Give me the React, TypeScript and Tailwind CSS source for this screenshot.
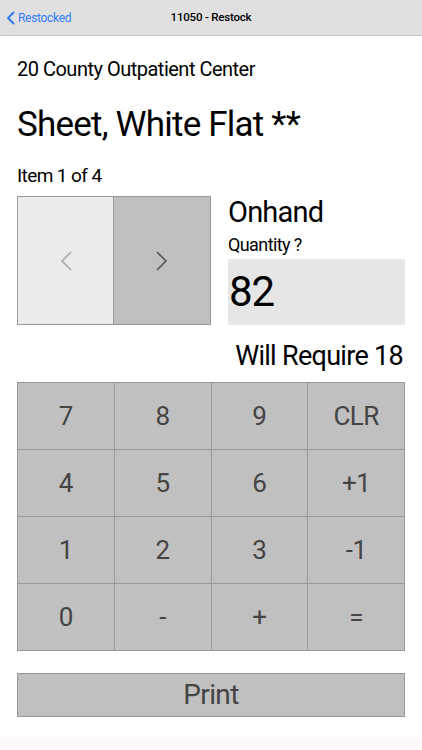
const keys = ['7', '8', '9', 'CLR', '4', '5', '6', '+1', '1', '2', '3', '-1', '0', '-', '+', '='];

const App = () => {
  return (
    <main
      className="w-[422px] h-[750px] bg-white flex flex-col overflow-hidden text-black"
      style={{ fontFamily: 'Roboto, "Liberation Sans", sans-serif' }}
    >
      <div className="h-[36px] shrink-0 bg-[#e0e0e0] border-b border-[#c4c4c4] flex items-center relative">
        <div className="flex items-center pl-[6px] text-[#2f7cf6] text-[12px] tracking-[-0.3px]">
          <svg width="9" height="14" viewBox="0 0 9 14" className="mr-[3px]">
            <path d="M7.5 1.5 L2 7 L7.5 12.5" fill="none" stroke="#2f7cf6" strokeWidth="2" strokeLinecap="round" strokeLinejoin="round" />
          </svg>
          Restocked
        </div>
        <div className="absolute left-0 right-0 text-center text-[11.5px] font-medium tracking-[-0.2px] pointer-events-none">
          11050 - Restock
        </div>
      </div>

      <div className="px-[17px] flex flex-col">
        <div className="mt-[20px] text-[20px] leading-[26px] tracking-[-0.5px]">20 County Outpatient Center</div>
        <div className="mt-[22px] text-[35px] leading-[42px] tracking-[-0.8px]">Sheet, White Flat **</div>
        <div className="mt-[18px] text-[19px] leading-[24px] tracking-[-0.6px]">Item 1 of 4</div>

        <div className="mt-[8px] flex">
          <div className="w-[194px] h-[129px] flex border border-[#999]">
            <div className="w-1/2 bg-[#ececec] flex items-center justify-center border-r border-[#999]">
              <svg width="14" height="22" viewBox="0 0 14 22">
                <path d="M12 2 L3 11 L12 20" fill="none" stroke="#aaa" strokeWidth="1.6" />
              </svg>
            </div>
            <div className="w-1/2 bg-[#bfbfbf] flex items-center justify-center">
              <svg width="14" height="22" viewBox="0 0 14 22">
                <path d="M2 2 L11 11 L2 20" fill="none" stroke="#555" strokeWidth="1.6" />
              </svg>
            </div>
          </div>
          <div className="ml-[17px] flex-1 flex flex-col">
            <div className="mt-[1px] text-[29px] leading-[30px] tracking-[-0.8px]">Onhand</div>
            <div className="mt-[6px] text-[18px] leading-[24px] tracking-[-0.6px]">Quantity ?</div>
            <div className="mt-[2px] h-[66px] bg-[#e6e6e6] flex items-center text-[42px] leading-none tracking-[-1px] pl-[1px]">82</div>
          </div>
        </div>

        <div className="mt-[14px] text-right pr-[2px] text-[27px] leading-[34px] tracking-[-0.7px]">Will Require 18</div>

        <div className="mt-[9px] grid grid-cols-4 border border-[#999] bg-[#999] gap-px">
          {keys.map((k) => (
            <div key={k} className="h-[66px] bg-[#c0c0c0] flex items-center justify-center text-[26px] text-[#444] tracking-[-0.6px]">
              {k}
            </div>
          ))}
        </div>

        <div className="mt-[22px] h-[44px] bg-[#c0c0c0] border border-[#999] flex items-center justify-center text-[28px] text-[#444] tracking-[-0.6px]">
          Print
        </div>
      </div>

      <div className="mt-auto h-[13px] bg-[#fdf9f9]" />
    </main>
  );
};

export default App;
